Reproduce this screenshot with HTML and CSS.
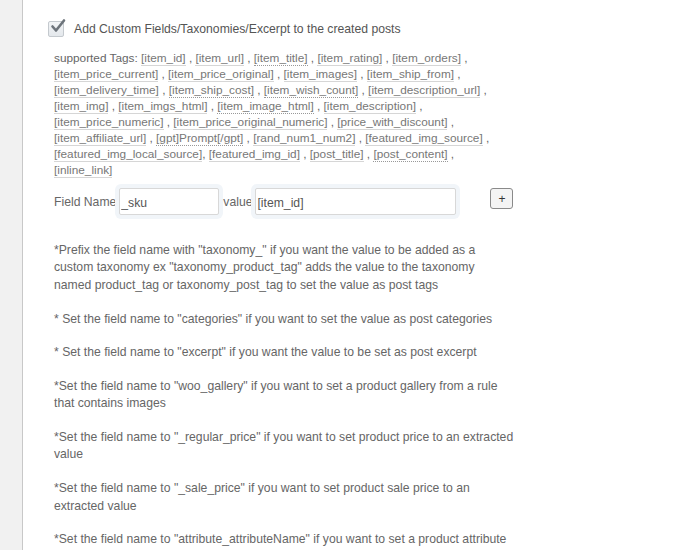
FILE: index.html
```html
<!DOCTYPE html>
<html lang="en">
<head>
    <meta charset="UTF-8">
    <title>Custom Fields</title>
    <link rel="stylesheet" href="styles.css">
</head>
<body>
    <div class="sidebar"></div>
    <div class="main">
        <label class="check-row">
            <span class="checkbox">
                <svg width="18" height="18" viewBox="0 0 18 18">
                    <path d="M3.5 8.5 L7 12.5 L15 2.5" fill="none" stroke="#6d747b" stroke-width="2.6" stroke-linecap="round" stroke-linejoin="round"/>
                </svg>
            </span>
            Add Custom Fields/Taxonomies/Excerpt to the created posts
        </label>

        <div class="tags">
            supported Tags: <span class="tag">[item_id]</span> , <span class="tag">[item_url]</span> , <span class="tag dot">[item_title]</span> , <span class="tag">[item_rating]</span> , <span class="tag">[item_orders]</span> ,<br>
            <span class="tag">[item_price_current]</span> , <span class="tag">[item_price_original]</span> , <span class="tag">[item_images]</span> , <span class="tag">[item_ship_from]</span> ,<br>
            <span class="tag">[item_delivery_time]</span> , <span class="tag dot">[item_ship_cost]</span> , <span class="tag dot">[item_wish_count]</span> , <span class="tag">[item_description_url]</span> ,<br>
            <span class="tag">[item_img]</span> , <span class="tag">[item_imgs_html]</span> , <span class="tag dot">[item_image_html]</span> , <span class="tag">[item_description]</span> ,<br>
            <span class="tag">[item_price_numeric]</span> , <span class="tag">[item_price_original_numeric]</span> , <span class="tag">[price_with_discount]</span> ,<br>
            <span class="tag">[item_affiliate_url]</span> , <span class="tag dot">[gpt]Prompt[/gpt]</span> , <span class="tag">[rand_num1_num2]</span> , <span class="tag">[featured_img_source]</span> ,<br>
            <span class="tag">[featured_img_local_source]</span>, <span class="tag">[featured_img_id]</span> , <span class="tag">[post_title]</span> , <span class="tag dot">[post_content]</span> ,<br>
            <span class="tag">[inline_link]</span>
        </div>

        <div class="field-row">
            <span class="field-label">Field Name</span>
            <span class="input-wrap"><input type="text" class="field-name" value="_sku"></span>
            <span class="field-label">value</span>
            <span class="input-wrap"><input type="text" class="field-value" value="[item_id]"></span>
            <button type="button" class="add-button">+</button>
        </div>

        <div class="notes">
            <p>*Prefix the field name with "taxonomy_" if you want the value to be added as a<br>
            custom taxonomy ex "taxonomy_product_tag" adds the value to the taxonomy<br>
            named product_tag or taxonomy_post_tag to set the value as post tags</p>
            <p>* Set the field name to "categories" if you want to set the value as post categories</p>
            <p>* Set the field name to "excerpt" if you want the value to be set as post excerpt</p>
            <p>*Set the field name to "woo_gallery" if you want to set a product gallery from a rule<br>
            that contains images</p>
            <p>*Set the field name to "_regular_price" if you want to set product price to an extracted<br>
            value</p>
            <p>*Set the field name to "_sale_price" if you want to set product sale price to an<br>
            extracted value</p>
            <p>*Set the field name to "attribute_attributeName" if you want to set a product attribute<br>
            to an extracted value ex "attribute_color" will set the product attribute color to the extracted value</p>
        </div>
    </div>
</body>
</html>
```

FILE: styles.css
```css
body {
    font-family: 'Liberation Sans', Arial, sans-serif;
    font-size: 12.2px;
    color: #666;
    background-color: #fff;
    margin: 0;
    padding: 0;
    display: flex;
    height: 550px;
    overflow: hidden;
}

.sidebar {
    width: 22px;
    flex-shrink: 0;
    background-color: #f1f1f1;
    border-right: 1px solid #c8c8c8;
}

.main {
    padding: 21px 0 0 31px;
    width: 520px;
}

.check-row {
    display: flex;
    align-items: center;
    gap: 10px;
    margin-left: -6px;
    color: #555;
}

.checkbox {
    position: relative;
    width: 14px;
    height: 14px;
    border: 1px solid #c4c9ce;
    border-radius: 2px;
    background: linear-gradient(#f2f4f6, #e4e8ec);
}

.checkbox svg {
    position: absolute;
    left: 0;
    top: -4px;
}

.tags {
    margin-top: 13px;
    font-size: 11.8px;
    line-height: 16px;
    white-space: nowrap;
}

.tag {
    color: #777;
    border-bottom: 1px solid #d6d6d6;
}

.tag.dot {
    border-bottom: 1px dotted #999;
}

.field-row {
    display: flex;
    align-items: center;
    margin-top: 6px;
    white-space: nowrap;
}

.field-label {
    margin-right: -1px;
}

.input-wrap {
    padding: 4px;
    background-color: #f1f5f9;
    border-radius: 6px;
}

.input-wrap input {
    font-family: 'Liberation Sans', Arial, sans-serif;
    font-size: 12.2px;
    color: #555;
    height: 27px;
    box-sizing: border-box;
    border: 1px solid #d8d8d8;
    border-radius: 2px;
    padding: 3px 1px 0;
    background: #fff;
    display: block;
}

.field-name {
    width: 100px;
}

.field-value {
    width: 201px;
}

.add-button {
    margin-left: 30px;
    margin-bottom: 6px;
    width: 23px;
    height: 21px;
    padding: 0;
    font-size: 12px;
    font-family: 'Liberation Sans', Arial, sans-serif;
    color: #333;
    background-color: #f4f4f4;
    border: 1px solid #8a8a8a;
    border-radius: 3px;
}

.notes {
    margin-top: 23px;
    line-height: 17.4px;
    white-space: nowrap;
}

.notes p {
    margin: 0 0 16.3px;
}
```
